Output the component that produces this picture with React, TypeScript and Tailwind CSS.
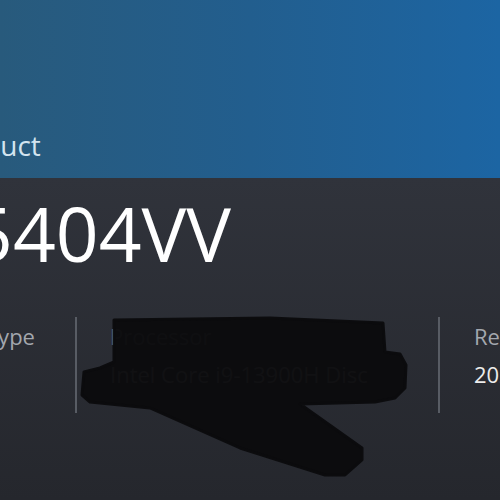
export default function App() {
  const font = { fontFamily: '"Open Sans", "Noto Sans", sans-serif' };

  return (
    <div className="relative h-[500px] w-[500px] overflow-hidden bg-[#2a2c33]" style={font}>
      <header className="flex h-[178px] flex-col justify-end bg-linear-to-r from-[#285a7c] via-[#225e8e] to-[#1c65a3] pb-[15px]">
        <p className="ml-[-62px] whitespace-nowrap text-[28px] leading-[36px] text-[#d3e4ef]">Product</p>
      </header>

      <main className="h-[322px] bg-linear-to-b from-[#30333b] to-[#25272d]">
        <h1 className="ml-[-30px] whitespace-nowrap pt-[18px] text-[75px] leading-[74px] text-white">
          5404VV
        </h1>

        <div className="mt-[47px] flex h-[96px] whitespace-nowrap text-[22px] leading-[29px]">
          <div className="ml-[-14px] w-[89px] shrink-0 pt-[5px]">
            <p className="text-[#a3a7ae]">Type</p>
          </div>
          <div className="w-[363px] shrink-0 border-l-2 border-[#585c64] pl-[33px] pt-[5px]">
            <p className="text-[#a3a7ae]">Processor</p>
            <p className="mt-[9px] text-[#ececec]">Intel Core i9-13900H Disc</p>
          </div>
          <div className="shrink-0 border-l-2 border-[#585c64] pl-[34px] pt-[5px]">
            <p className="text-[#a3a7ae]">Released</p>
            <p className="mt-[9px] text-[#ececec]">2024</p>
          </div>
        </div>
      </main>

      <svg
        className="pointer-events-none absolute left-0 top-0"
        width="500"
        height="500"
        viewBox="0 0 500 500"
      >
        <polygon
          points="114,320 270,318 383,323 385,352 400,354 406,365 405,388 395,398 375,402 300,404 362,448 362,460 345,475 325,475 240,448 150,408 90,402 82,395 84,372 100,368 114,362"
          fill="#0b0b0d"
          fillOpacity="0.975"
          stroke="#0b0b0d"
          strokeOpacity="0.975"
          strokeWidth="3"
          strokeLinejoin="round"
        />
      </svg>
    </div>
  );
}
